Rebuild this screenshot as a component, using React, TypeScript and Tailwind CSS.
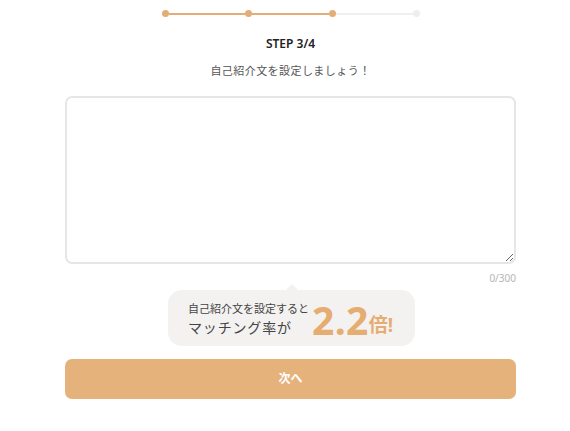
import { useState } from 'react'

const steps = [0, 1, 2, 3]
const current = 2

export default function App() {
  const [text, setText] = useState('')

  return (
    <div
      className="w-[570px] h-[431px] bg-white"
      style={{ fontFamily: '"Noto Sans", "Noto Sans CJK JP", sans-serif' }}
    >
      <div className="ml-[65px] w-[451px] pt-[10px] flex flex-col items-center">
        {/* progress */}
        <div className="w-[258px] flex items-center">
          {steps.map((s) => (
            <div key={s} className={s < 3 ? 'flex items-center flex-1' : 'flex items-center'}>
              <div
                className={
                  'w-[7px] h-[7px] rounded-full shrink-0 ' +
                  (s <= current ? 'bg-[#e2ae76]' : 'bg-[#eeeeee]')
                }
              />
              {s < 3 && (
                <div
                  className={'h-[2px] flex-1 ' + (s < current ? 'bg-[#e2ae76]' : 'bg-[#efefef]')}
                />
              )}
            </div>
          ))}
        </div>

        <h1 className="mt-[19px] text-[12px] font-semibold text-[#222] leading-[16px]">STEP 3/4</h1>
        <p className="mt-[11px] text-[11px] text-[#555] leading-[16px] tracking-[0.04em]">
          自己紹介文を設定しましょう！
        </p>

        <textarea
          value={text}
          onChange={(e) => setText(e.target.value)}
          maxLength={300}
          className="mt-[17px] w-full h-[168px] border-2 border-[#e6e6e6] rounded-[7px] p-3 text-[13px] outline-none resize-y"
        />
        <div className="w-full text-right text-[10px] text-[#b5b5b5] leading-[14px] mt-[7px]">
          {text.length}/300
        </div>

        {/* bubble */}
        <div className="relative mt-[5px] ml-[2px] w-[247px] h-[56px] bg-[#f4f2f0] rounded-[14px] flex items-center pl-[20px]">
          <div className="absolute -top-[6px] left-1/2 -translate-x-1/2 w-0 h-0 border-l-[7px] border-r-[7px] border-b-[7px] border-l-transparent border-r-transparent border-b-[#f4f2f0]" />
          <div className="flex flex-col text-[#444] mt-[2px]">
            <span className="text-[11px] leading-[18px]">自己紹介文を設定すると</span>
            <span className="text-[14px] leading-[20px] tracking-[0.06em]">マッチング率が</span>
          </div>
          <div className="ml-[3px] flex items-end text-[#e5ad72] font-bold mt-[4px]">
            <span className="text-[39px] leading-[38px] tracking-[0.01em]">2.2</span>
            <span className="text-[19px] leading-[24px] mb-[2px]">倍!</span>
          </div>
        </div>

        <button className="mt-[13px] w-full h-[40px] rounded-[7px] bg-[#e6b27c] text-white text-[12px] font-bold">
          次へ
        </button>
      </div>
    </div>
  )
}
